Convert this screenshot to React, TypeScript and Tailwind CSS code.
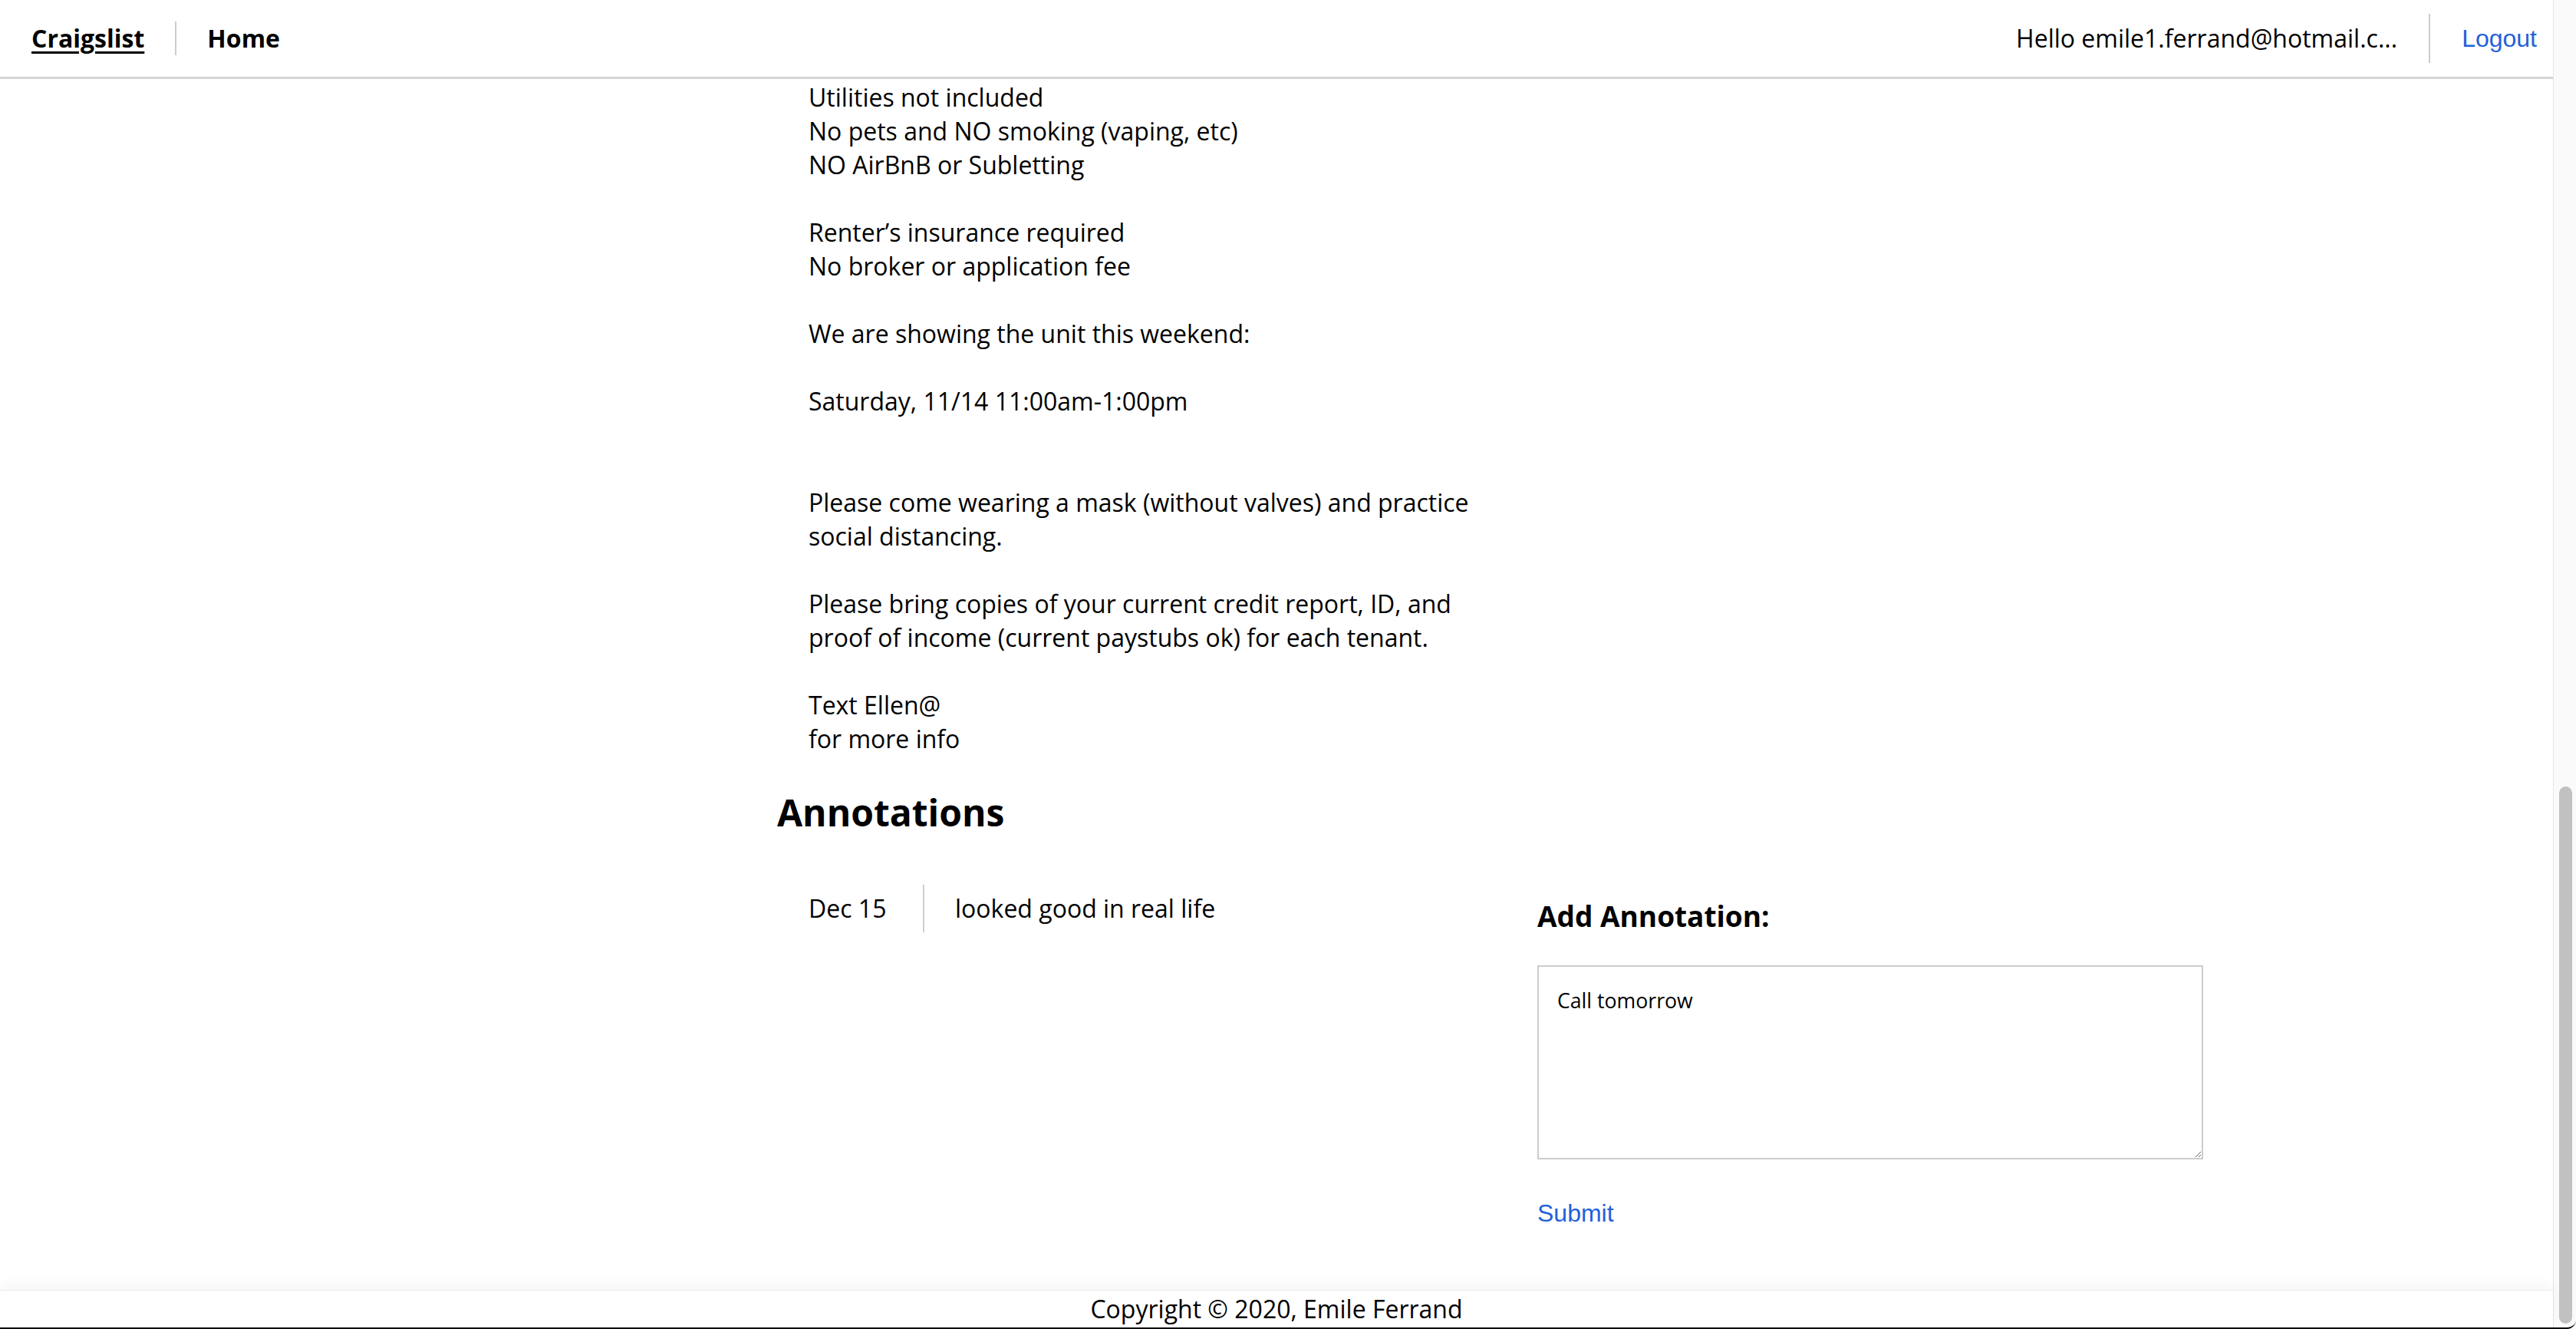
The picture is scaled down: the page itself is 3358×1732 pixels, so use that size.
const description = [
  "Utilities not included",
  "No pets and NO smoking (vaping, etc)",
  "NO AirBnB or Subletting",
  "",
  "Renter’s insurance required",
  "No broker or application fee",
  "",
  "We are showing the unit this weekend:",
  "",
  "Saturday, 11/14 11:00am-1:00pm",
  "",
  "",
  "Please come wearing a mask (without valves) and practice social distancing.",
  "",
  "Please bring copies of your current credit report, ID, and proof of income (current paystubs ok) for each tenant.",
  "",
  "Text Ellen@",
  "for more info",
]

const annotations = [{ date: "Dec 15", text: "looked good in real life" }]

export default function App() {
  return (
    <div className="flex h-[1732px] w-[3358px] flex-col overflow-hidden rounded-br-[12px] border-b-2 border-black bg-white font-['Open_Sans',sans-serif] text-black">
      <div className="flex min-h-0 flex-1">
        <div className="flex min-w-0 flex-1 flex-col">
          {/* Top bar */}
          <header className="flex h-[103px] shrink-0 items-center border-b-[3px] border-[#d4d4d4] pl-[41px] pr-[21px]">
            <a className="text-[32px] font-bold leading-none underline underline-offset-[5px]">Craigslist</a>
            <div className="mx-[40px] h-[44px] w-[2px] bg-[#cccccc]"></div>
            <a className="text-[32px] font-bold leading-none">Home</a>
            <div className="flex-1"></div>
            <span className="text-[32px] leading-none">Hello emile1.ferrand@hotmail.c...</span>
            <div className="mx-[41px] h-[64px] w-[2px] bg-[#cccccc]"></div>
            <button className="font-['Liberation_Sans',Arial,sans-serif] text-[32px] leading-none text-[#2360d8]">
              Logout
            </button>
          </header>

          {/* Listing */}
          <main className="min-h-0 flex-1 overflow-hidden">
            <div className="ml-[1013px] w-[1900px]">
              <div className="w-[931px] pl-[41px] pt-[2px] text-[32px] leading-[44px]">
                {description.map((line, i) => (
                  <p key={i} className="min-h-[44px]">
                    {line}
                  </p>
                ))}
              </div>

              <h2 className="mt-[42px] text-[48px] font-bold leading-[64px]">Annotations</h2>

              <div className="flex">
                <div className="w-[989px]">
                  {annotations.map((a) => (
                    <div key={a.date} className="mt-[62px] flex h-[62px] items-stretch pl-[41px] text-[32px]">
                      <div className="flex w-[151px] items-center border-r-2 border-[#d0d0d0]">{a.date}</div>
                      <div className="flex items-center pl-[40px]">{a.text}</div>
                    </div>
                  ))}
                </div>

                <div className="flex flex-col items-start pl-[2px]">
                  <h3 className="mt-[78px] text-[37px] font-bold leading-[50px]">Add Annotation:</h3>
                  <textarea
                    readOnly
                    value="Call tomorrow"
                    className="mt-[39px] h-[253px] w-[868px] border-2 border-[#cccccc] p-[24px] font-['Open_Sans',sans-serif] text-[26.67px] outline-none"
                  />
                  <button className="mt-[50px] font-['Liberation_Sans',Arial,sans-serif] text-[32px] leading-[40px] text-[#2360d8]">
                    Submit
                  </button>
                </div>
              </div>
            </div>
          </main>

          {/* Footer */}
          <footer className="relative z-10 flex h-[49px] shrink-0 items-center justify-center border-t border-[#ececec] bg-white text-[32px] shadow-[0_-8px_14px_rgba(0,0,0,0.035)]">
            Copyright © 2020, Emile Ferrand
          </footer>
        </div>

        {/* Scrollbar */}
        <div className="flex w-[30px] shrink-0 flex-col justify-end border-l border-[#e6e6e6] bg-[#fafafa] pb-[5px] pl-[7px] pr-[5px]">
          <div className="h-[700px] rounded-full bg-[#c1c1c1]"></div>
        </div>
      </div>
    </div>
  )
}
